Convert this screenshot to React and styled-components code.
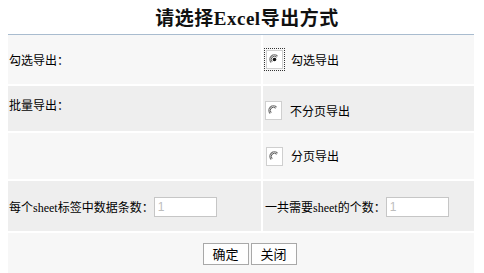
import React from 'react'
import styled, { createGlobalStyle } from 'styled-components'

const GlobalStyle = createGlobalStyle`
  html, body {
    margin: 0;
    padding: 0;
    background: #ffffff;
  }
  body {
    font-family: "Liberation Serif", "Noto Sans CJK SC", serif;
    font-size: 12px;
    color: #000;
  }
`

const Page = styled.div`
  width: 484px;
  height: 273px;
  overflow: hidden;
  padding: 8px 10px 0 8px;
  box-sizing: border-box;
`

const Title = styled.h1`
  margin: 0;
  height: 26px;
  line-height: 22px;
  padding-left: 12px;
  text-align: center;
  font-family: "Liberation Serif", "Noto Sans CJK SC", serif;
  font-size: 19px;
  font-weight: bold;
  letter-spacing: 0.5px;
  color: #111;
`

const Table = styled.div`
  display: grid;
  grid-template-columns: 253px 1fr;
  grid-template-rows: 49px 45px 46px 50px 46px;
  column-gap: 2px;
  row-gap: 2px;
  border-top: 1px solid #a9bccf;
  background: #ffffff;
`

const Cell = styled.div`
  display: flex;
  align-items: center;
  padding: ${p => p.$pad || '0 0 0 1px'};
  background: ${p => (p.$dark ? '#eeeeee' : '#f7f7f7')};
  grid-column: ${p => (p.$span ? '1 / span 2' : 'auto')};
  justify-content: ${p => (p.$center ? 'center' : 'flex-start')};
  font-family: "Liberation Serif", "Noto Sans CJK SC", serif;
  font-size: 12px;
  white-space: nowrap;
`

const RadioRow = styled.label`
  display: flex;
  align-items: center;
  gap: 8px;
  padding-left: 2px;
`

const RadioBox = styled.span`
  width: 17px;
  height: 19px;
  box-sizing: border-box;
  border: 1px solid #cfcfcf;
  background: #ffffff;
  outline: ${p => (p.$focus ? '1px dotted #333' : 'none')};
  outline-offset: 1px;
  display: flex;
  align-items: center;
  justify-content: center;
`

const Input = styled.input`
  width: 63px;
  height: 20px;
  box-sizing: border-box;
  border: 1px solid #c6c6c6;
  background: #fff;
  padding: 0 3px;
  margin: 0;
  color: #bdbdbd;
  font-family: "Liberation Sans", Arial, sans-serif;
  font-size: 12px;
  outline: none;
`

const Buttons = styled.div`
  display: flex;
  gap: 2px;
  padding-left: 16px;
  padding-bottom: 4px;
`

const Button = styled.button`
  width: 46px;
  height: 22px;
  margin: 0;
  padding: 0;
  background: #fefefe;
  border: 1px solid #a8a8a8;
  font-family: "Noto Sans CJK SC", sans-serif;
  font-size: 13px;
  color: #000;
  line-height: 20px;
`

const Radio = ({ checked, focus }) => (
  <RadioBox $focus={focus}>
    <svg width="11" height="11" viewBox="0 0 11 11">
      <path d="M8.5 2.2 A4.2 4.2 0 0 0 2.2 8.5" fill="none" stroke="#777" strokeWidth="1.3" />
      <path d="M7.6 3.2 A3 3 0 0 0 3.2 7.6" fill="none" stroke="#444" strokeWidth="0.9" />
      {checked && <circle cx="5.5" cy="5.5" r="1.8" fill="#111" />}
    </svg>
  </RadioBox>
)

export default function App() {
  return (
    <Page>
      <GlobalStyle />
      <Title>请选择Excel导出方式</Title>
      <Table>
        <Cell>勾选导出：</Cell>
        <Cell>
          <RadioRow>
            <Radio checked focus />
            <span>勾选导出</span>
          </RadioRow>
        </Cell>

        <Cell $dark $pad="0 0 8px 1px">批量导出：</Cell>
        <Cell $dark $pad="4px 0 0 0">
          <RadioRow>
            <Radio />
            <span>不分页导出</span>
          </RadioRow>
        </Cell>

        <Cell />
        <Cell>
          <RadioRow>
            <Radio />
            <span>分页导出</span>
          </RadioRow>
        </Cell>

        <Cell $dark $pad="2px 0 0 1px">
          每个sheet标签中数据条数：<Input defaultValue="1" />
        </Cell>
        <Cell $dark $pad="2px 0 0 2px">
          一共需要sheet的个数：<Input defaultValue="1" />
        </Cell>

        <Cell $span $center>
          <Buttons>
            <Button>确定</Button>
            <Button>关闭</Button>
          </Buttons>
        </Cell>
      </Table>
    </Page>
  )
}
